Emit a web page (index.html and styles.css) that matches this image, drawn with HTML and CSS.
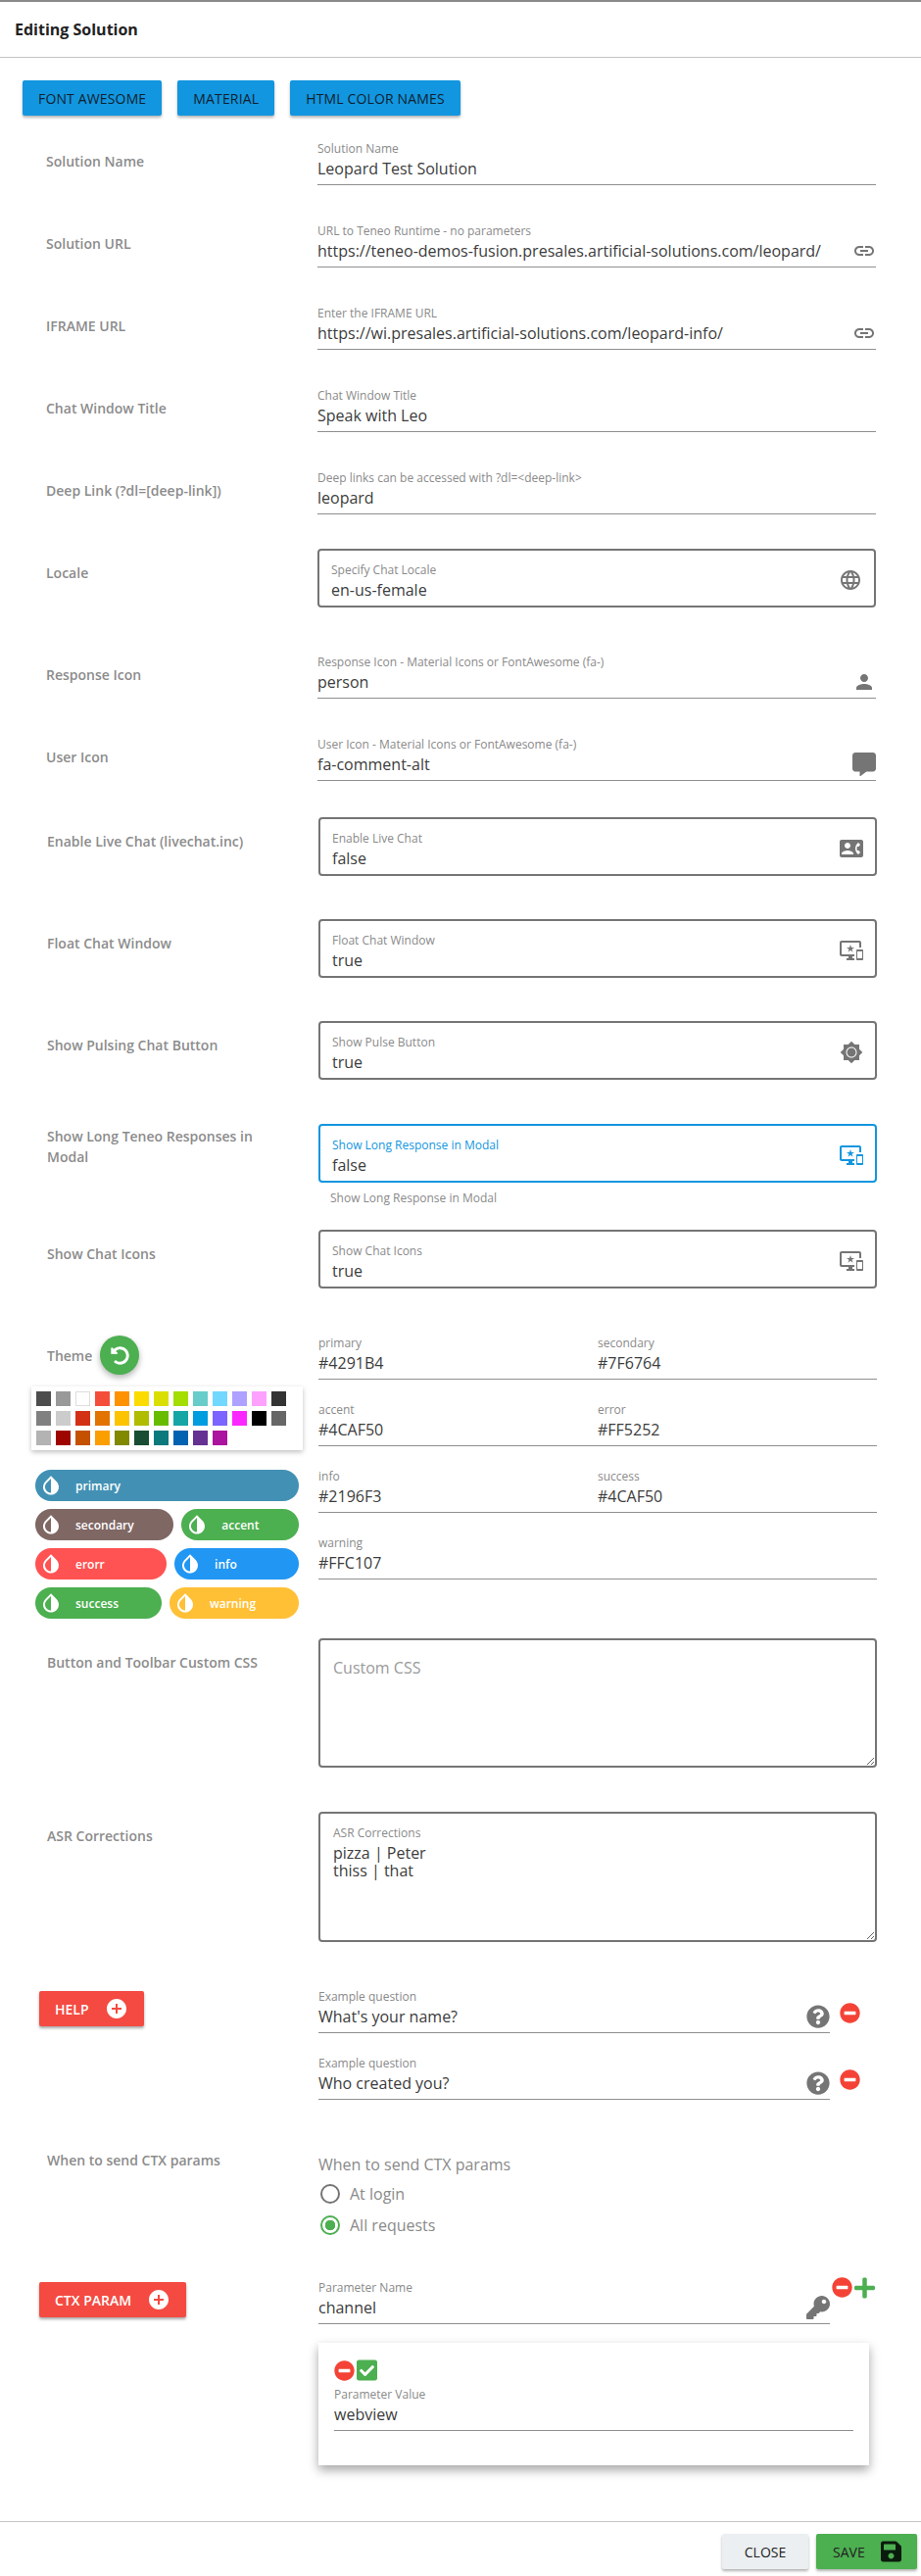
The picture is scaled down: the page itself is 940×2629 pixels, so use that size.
FILE: index.html
```html
<!DOCTYPE html>
<html lang="en">
<head>
  <meta charset="UTF-8">
  <title>Editing Solution</title>
  <link rel="stylesheet" href="styles.css">
</head>
<body>
  <svg class="sprite" xmlns="http://www.w3.org/2000/svg">
    <symbol id="i-link" viewBox="0 0 24 24"><path d="M3.9 12c0-1.71 1.39-3.1 3.1-3.1h4V7H7c-2.76 0-5 2.24-5 5s2.24 5 5 5h4v-1.9H7c-1.71 0-3.1-1.39-3.1-3.1zM8 13h8v-2H8v2zm9-6h-4v1.9h4c1.71 0 3.1 1.39 3.1 3.1s-1.39 3.1-3.1 3.1h-4V17h4c2.76 0 5-2.24 5-5s-2.24-5-5-5z"/></symbol>
    <symbol id="i-globe" viewBox="0 0 24 24"><path d="M11.99 2C6.47 2 2 6.48 2 12s4.47 10 9.99 10C17.52 22 22 17.52 22 12S17.52 2 11.99 2zm6.93 6h-2.95c-.32-1.25-.78-2.45-1.38-3.56 1.84.63 3.37 1.91 4.33 3.56zM12 4.04c.83 1.2 1.48 2.53 1.91 3.96h-3.82c.43-1.43 1.08-2.76 1.91-3.96zM4.26 14C4.1 13.36 4 12.69 4 12s.1-1.36.26-2h3.38c-.08.66-.14 1.32-.14 2 0 .68.06 1.34.14 2H4.26zm.82 2h2.95c.32 1.25.78 2.45 1.38 3.56-1.84-.63-3.37-1.9-4.33-3.56zm2.95-8H5.08c.96-1.66 2.49-2.93 4.33-3.56C8.81 5.55 8.35 6.75 8.03 8zM12 19.96c-.83-1.2-1.48-2.53-1.91-3.96h3.82c-.43 1.43-1.08 2.76-1.91 3.96zM14.34 14H9.66c-.09-.66-.16-1.32-.16-2 0-.68.07-1.35.16-2h4.68c.09.65.16 1.32.16 2 0 .68-.07 1.34-.16 2zm.25 5.56c.6-1.11 1.06-2.31 1.38-3.56h2.95c-.96 1.65-2.49 2.93-4.33 3.56zM16.36 14c.08-.66.14-1.32.14-2 0-.68-.06-1.34-.14-2h3.38c.16.64.26 1.31.26 2s-.1 1.36-.26 2h-3.38z"/></symbol>
    <symbol id="i-person" viewBox="0 0 24 24"><path d="M12 12c2.21 0 4-1.79 4-4s-1.79-4-4-4-4 1.79-4 4 1.79 4 4 4zm0 2c-2.67 0-8 1.34-8 4v2h16v-2c0-2.66-5.33-4-8-4z"/></symbol>
    <symbol id="i-comment" viewBox="0 0 512 512"><path d="M448 0H64C28.7 0 0 28.7 0 64v288c0 35.3 28.7 64 64 64h96v84c0 9.8 11.2 15.5 19.1 9.7L304 416h144c35.3 0 64-28.7 64-64V64c0-35.3-28.7-64-64-64z"/></symbol>
    <symbol id="i-contact" viewBox="0 0 24 24"><path d="M22 3H2C.9 3 0 3.9 0 5v14c0 1.1.9 2 2 2h20c1.1 0 1.99-.9 1.99-2L24 5c0-1.1-.9-2-2-2zM8 6c1.66 0 3 1.34 3 3s-1.34 3-3 3-3-1.34-3-3 1.34-3 3-3zm6 12H2v-1c0-2 4-3.1 6-3.1s6 1.1 6 3.1v1zm3.85-4h1.64L21 16l-1.99 1.99c-1.31-.98-2.28-2.38-2.73-3.99-.18-.64-.28-1.31-.28-2s.1-1.36.28-2c.45-1.62 1.42-3.01 2.73-3.99L21 8l-1.51 2h-1.64c-.22.63-.35 1.3-.35 2s.13 1.37.35 2z"/></symbol>
    <symbol id="i-devices" viewBox="0 0 24 24"><path d="M23 11.01L18 11c-.55 0-1 .45-1 1v9c0 .55.45 1 1 1h5c.55 0 1-.45 1-1v-9c0-.55-.45-.99-1-.99zM23 20h-5v-7h5v7zM20 2H2C.89 2 0 2.89 0 4v12c0 1.1.89 2 2 2h7v2H7v2h8v-2h-2v-2h2v-2H2V4h18v5h2V4c0-1.11-.9-2-2-2zm-8.03 7L11 6l-.97 3H7l2.47 1.76-.94 2.91 2.47-1.8 2.47 1.8-.94-2.91L15 9h-3.03z"/></symbol>
    <symbol id="i-sun" viewBox="0 0 24 24"><path d="M20 8.69V4h-4.69L12 .69 8.69 4H4v4.69L.69 12 4 15.31V20h4.69L12 23.31 15.31 20H20v-4.69L23.31 12 20 8.69zM12 17.5c-3.04 0-5.5-2.46-5.5-5.5s2.46-5.5 5.5-5.5 5.5 2.46 5.5 5.5-2.46 5.5-5.5 5.5zm0-10c-2.49 0-4.5 2.01-4.5 4.5s2.01 4.5 4.5 4.5 4.5-2.01 4.5-4.5-2.01-4.5-4.5-4.5z"/></symbol>
    <symbol id="i-undo" viewBox="0 0 512 512"><path d="M255.545 8c-66.269.119-126.438 26.233-170.86 68.685L48.971 40.971C33.851 25.851 8 36.559 8 57.941V192c0 13.255 10.745 24 24 24h134.059c21.382 0 32.09-25.851 16.971-40.971l-41.75-41.75c30.864-28.899 70.801-44.907 113.23-45.273 92.398-.798 170.283 73.977 169.484 169.442C423.236 348.009 349.816 424 256 424c-41.127 0-79.997-14.678-110.63-41.556-4.743-4.161-11.906-3.908-16.368.553L89.34 422.659c-4.872 4.872-4.631 12.815.482 17.433C133.798 479.813 192.074 504 256 504c136.966 0 247.999-111.033 248-247.998C504.001 119.193 392.354 7.755 255.545 8z"/></symbol>
    <symbol id="i-drop" viewBox="0 0 24 24"><path d="M17.66 7.93L12 2.27 6.34 7.93c-3.12 3.12-3.12 8.19 0 11.31C7.9 20.8 9.95 21.58 12 21.58c2.05 0 4.1-.78 5.66-2.34 3.12-3.12 3.12-8.19 0-11.31zM12 19.59c-1.6 0-3.11-.62-4.24-1.76C6.62 16.69 6 15.19 6 13.59s.62-3.11 1.76-4.24L12 5.1v14.49z"/></symbol>
    <symbol id="i-add" viewBox="0 0 24 24"><path d="M12 2C6.48 2 2 6.48 2 12s4.48 10 10 10 10-4.48 10-10S17.52 2 12 2zm5 11h-4v4h-2v-4H7v-2h4V7h2v4h4v2z"/></symbol>
    <symbol id="i-minus" viewBox="0 0 512 512"><path d="M256 8C119 8 8 119 8 256s111 248 248 248 248-111 248-248S393 8 256 8zM124 296c-6.6 0-12-5.4-12-12v-56c0-6.6 5.4-12 12-12h264c6.6 0 12 5.4 12 12v56c0 6.6-5.4 12-12 12H124z"/></symbol>
    <symbol id="i-help" viewBox="0 0 512 512"><path d="M504 256c0 136.997-111.043 248-248 248S8 392.997 8 256C8 119.083 119.043 8 256 8s248 111.083 248 248zM262.655 90c-54.497 0-89.255 22.957-116.549 63.758-3.536 5.286-2.353 12.415 2.715 16.258l34.699 26.31c5.205 3.947 12.621 3.008 16.665-2.122 17.864-22.658 30.113-35.797 57.303-35.797 20.429 0 45.698 13.148 45.698 32.958 0 14.976-12.363 22.667-32.534 33.976C247.128 238.528 216 254.941 216 296v4c0 6.627 5.373 12 12 12h56c6.627 0 12-5.373 12-12v-1.333c0-28.462 83.186-29.647 83.186-106.667 0-58.002-60.165-102-116.531-102zM256 338c-25.365 0-46 20.635-46 46 0 25.364 20.635 46 46 46s46-20.636 46-46c0-25.365-20.635-46-46-46z"/></symbol>
    <symbol id="i-key" viewBox="0 0 512 512"><path d="M512 176.001C512 273.203 433.202 352 336 352c-11.22 0-22.19-1.062-32.827-3.069l-24.012 27.014A23.999 23.999 0 0 1 261.223 384H224v40c0 13.255-10.745 24-24 24h-40v40c0 13.255-10.745 24-24 24H24c-13.255 0-24-10.745-24-24v-78.059c0-6.365 2.529-12.47 7.029-16.971l161.802-161.802C163.108 213.814 160 195.271 160 176 160 78.798 238.797.001 335.999 0 433.488-.001 512 78.511 512 176.001zM336 128c0 26.51 21.49 48 48 48s48-21.49 48-48-21.49-48-48-48-48 21.49-48 48z"/></symbol>
    <symbol id="i-plus" viewBox="0 0 448 512"><path d="M416 208H272V64c0-17.67-14.33-32-32-32h-32c-17.67 0-32 14.33-32 32v144H32c-17.67 0-32 14.33-32 32v32c0 17.67 14.33 32 32 32h144v144c0 17.67 14.33 32 32 32h32c17.67 0 32-14.33 32-32V304h144c17.67 0 32-14.33 32-32v-32c0-17.67-14.33-32-32-32z"/></symbol>
    <symbol id="i-check" viewBox="0 0 448 512"><path d="M400 480H48c-26.51 0-48-21.49-48-48V80c0-26.51 21.49-48 48-48h352c26.51 0 48 21.49 48 48v352c0 26.51-21.49 48-48 48zm-204.686-98.059l184-184c6.248-6.248 6.248-16.379 0-22.627l-22.627-22.627c-6.248-6.248-16.379-6.249-22.628 0L184 302.745l-70.059-70.059c-6.248-6.248-16.379-6.248-22.628 0l-22.627 22.627c-6.248 6.248-6.248 16.379 0 22.627l104 104c6.249 6.25 16.379 6.25 22.628.001z"/></symbol>
    <symbol id="i-save" viewBox="0 0 448 512"><path d="M433.941 129.941l-83.882-83.882A48 48 0 0 0 316.118 32H48C21.49 32 0 53.49 0 80v352c0 26.51 21.49 48 48 48h352c26.51 0 48-21.49 48-48V163.882a48 48 0 0 0-14.059-33.941zM224 416c-35.346 0-64-28.654-64-64 0-35.346 28.654-64 64-64s64 28.654 64 64c0 35.346-28.654 64-64 64zm96-304.52V212c0 6.627-5.373 12-12 12H76c-6.627 0-12-5.373-12-12V108c0-6.627 5.373-12 12-12h228.52c3.183 0 6.235 1.264 8.485 3.515l3.48 3.48A11.996 11.996 0 0 1 320 111.48z"/></symbol>
  </svg>

  <header class="title-bar">Editing Solution</header>

  <div class="toolbar">
    <button class="btn-blue">Font Awesome</button>
    <button class="btn-blue">Material</button>
    <button class="btn-blue">HTML Color Names</button>
  </div>

  <div class="row row-a gap-39">
    <div class="row-label">Solution Name</div>
    <div class="field">
      <div class="field-label">Solution Name</div>
      <div class="field-input"><span>Leopard Test Solution</span></div>
    </div>
  </div>

  <div class="row row-a gap-39">
    <div class="row-label">Solution URL</div>
    <div class="field">
      <div class="field-label">URL to Teneo Runtime - no parameters</div>
      <div class="field-input"><span>https://teneo-demos-fusion.presales.artificial-solutions.com/leopard/</span><svg class="icon"><use href="#i-link"/></svg></div>
    </div>
  </div>

  <div class="row row-a gap-39">
    <div class="row-label">IFRAME URL</div>
    <div class="field">
      <div class="field-label">Enter the IFRAME URL</div>
      <div class="field-input"><span>https://wi.presales.artificial-solutions.com/leopard-info/</span><svg class="icon"><use href="#i-link"/></svg></div>
    </div>
  </div>

  <div class="row row-a gap-39">
    <div class="row-label">Chat Window Title</div>
    <div class="field">
      <div class="field-label">Chat Window Title</div>
      <div class="field-input"><span>Speak with Leo</span></div>
    </div>
  </div>

  <div class="row row-a gap-35">
    <div class="row-label">Deep Link (?dl=[deep-link])</div>
    <div class="field">
      <div class="field-label">Deep links can be accessed with ?dl=&lt;deep-link&gt;</div>
      <div class="field-input"><span>leopard</span></div>
    </div>
  </div>

  <div class="row row-a gap-48">
    <div class="row-label boxed">Locale</div>
    <div class="select-box">
      <div class="select-text">
        <div class="field-label">Specify Chat Locale</div>
        <div class="select-value">en-us-female</div>
      </div>
      <svg class="icon"><use href="#i-globe"/></svg>
    </div>
  </div>

  <div class="row row-a gap-39">
    <div class="row-label">Response Icon</div>
    <div class="field">
      <div class="field-label">Response Icon - Material Icons or FontAwesome (fa-)</div>
      <div class="field-input"><span>person</span><svg class="icon"><use href="#i-person"/></svg></div>
    </div>
  </div>

  <div class="row row-a gap-37">
    <div class="row-label">User Icon</div>
    <div class="field">
      <div class="field-label">User Icon - Material Icons or FontAwesome (fa-)</div>
      <div class="field-input"><span>fa-comment-alt</span><svg class="icon"><use href="#i-comment"/></svg></div>
    </div>
  </div>

  <div class="row gap-44">
    <div class="row-label boxed">Enable Live Chat (livechat.inc)</div>
    <div class="select-box">
      <div class="select-text">
        <div class="field-label">Enable Live Chat</div>
        <div class="select-value">false</div>
      </div>
      <svg class="icon"><use href="#i-contact"/></svg>
    </div>
  </div>

  <div class="row gap-44">
    <div class="row-label boxed">Float Chat Window</div>
    <div class="select-box">
      <div class="select-text">
        <div class="field-label">Float Chat Window</div>
        <div class="select-value">true</div>
      </div>
      <svg class="icon"><use href="#i-devices"/></svg>
    </div>
  </div>

  <div class="row gap-45">
    <div class="row-label boxed">Show Pulsing Chat Button</div>
    <div class="select-box">
      <div class="select-text">
        <div class="field-label">Show Pulse Button</div>
        <div class="select-value">true</div>
      </div>
      <svg class="icon"><use href="#i-sun"/></svg>
    </div>
  </div>

  <div class="row gap-24">
    <div class="row-label two-line">Show Long Teneo Responses in Modal</div>
    <div class="field-col">
      <div class="select-box focused">
        <div class="select-text">
          <div class="field-label">Show Long Response in Modal</div>
          <div class="select-value">false</div>
        </div>
        <svg class="icon"><use href="#i-devices"/></svg>
      </div>
      <div class="hint">Show Long Response in Modal</div>
    </div>
  </div>

  <div class="row gap-48">
    <div class="row-label boxed">Show Chat Icons</div>
    <div class="select-box">
      <div class="select-text">
        <div class="field-label">Show Chat Icons</div>
        <div class="select-value">true</div>
      </div>
      <svg class="icon"><use href="#i-devices"/></svg>
    </div>
  </div>

  <div class="row gap-20">
    <div class="theme-col">
      <div class="theme-head">
        <div class="row-label">Theme</div>
        <button class="fab"><svg class="fab-icon"><use href="#i-undo"/></svg></button>
      </div>
      <div class="swatches">
        <i style="background:#4d4d4d"></i><i style="background:#999999"></i><i class="swatch-white"></i><i style="background:#f44e3b"></i><i style="background:#fe9200"></i><i style="background:#fcdc00"></i><i style="background:#dbdf00"></i><i style="background:#a4dd00"></i><i style="background:#68ccca"></i><i style="background:#73d8ff"></i><i style="background:#aea1ff"></i><i style="background:#fda1ff"></i><i style="background:#333333"></i>
        <i style="background:#808080"></i><i style="background:#cccccc"></i><i style="background:#d33115"></i><i style="background:#e27300"></i><i style="background:#fcc400"></i><i style="background:#b0bc00"></i><i style="background:#68bc00"></i><i style="background:#16a5a5"></i><i style="background:#009ce0"></i><i style="background:#7b64ff"></i><i style="background:#fa28ff"></i><i style="background:#000000"></i><i style="background:#666666"></i>
        <i style="background:#b3b3b3"></i><i style="background:#9f0500"></i><i style="background:#c45100"></i><i style="background:#fb9e00"></i><i style="background:#808900"></i><i style="background:#194d33"></i><i style="background:#0c797d"></i><i style="background:#0062b1"></i><i style="background:#653294"></i><i style="background:#ab149e"></i>
      </div>
      <div class="chips">
        <div class="chip chip-primary"><svg class="chip-icon"><use href="#i-drop"/></svg>primary</div>
        <div class="chip chip-secondary"><svg class="chip-icon"><use href="#i-drop"/></svg>secondary</div>
        <div class="chip chip-green"><svg class="chip-icon"><use href="#i-drop"/></svg>accent</div>
        <div class="chip chip-error"><svg class="chip-icon"><use href="#i-drop"/></svg>erorr</div>
        <div class="chip chip-info"><svg class="chip-icon"><use href="#i-drop"/></svg>info</div>
        <div class="chip chip-green"><svg class="chip-icon"><use href="#i-drop"/></svg>success</div>
        <div class="chip chip-warning"><svg class="chip-icon"><use href="#i-drop"/></svg>warning</div>
      </div>
    </div>
    <div class="theme-fields">
      <div class="field"><div class="field-label">primary</div><div class="field-input"><span>#4291B4</span></div></div>
      <div class="field"><div class="field-label">secondary</div><div class="field-input"><span>#7F6764</span></div></div>
      <div class="field"><div class="field-label">accent</div><div class="field-input"><span>#4CAF50</span></div></div>
      <div class="field"><div class="field-label">error</div><div class="field-input"><span>#FF5252</span></div></div>
      <div class="field"><div class="field-label">info</div><div class="field-input"><span>#2196F3</span></div></div>
      <div class="field"><div class="field-label">success</div><div class="field-input"><span>#4CAF50</span></div></div>
      <div class="field field-wide"><div class="field-label">warning</div><div class="field-input"><span>#FFC107</span></div></div>
    </div>
  </div>

  <div class="row gap-45">
    <div class="row-label boxed">Button and Toolbar Custom CSS</div>
    <div class="area-box">
      <label class="area-placeholder">Custom CSS</label>
      <textarea></textarea>
    </div>
  </div>

  <div class="row gap-48">
    <div class="row-label boxed">ASR Corrections</div>
    <div class="area-box area-tall">
      <label class="field-label">ASR Corrections</label>
      <textarea>pizza | Peter
thiss | that</textarea>
    </div>
  </div>

  <div class="row gap-51">
    <div class="label-col">
      <button class="btn-red">Help<svg class="icon-add"><use href="#i-add"/></svg></button>
    </div>
    <div class="field-col stack">
      <div class="line">
        <div class="field field-short">
          <div class="field-label">Example question</div>
          <div class="field-input"><span>What's your name?</span><svg class="icon"><use href="#i-help"/></svg></div>
        </div>
        <svg class="icon-minus"><use href="#i-minus"/></svg>
      </div>
      <div class="line">
        <div class="field field-short">
          <div class="field-label">Example question</div>
          <div class="field-input"><span>Who created you?</span><svg class="icon"><use href="#i-help"/></svg></div>
        </div>
        <svg class="icon-minus"><use href="#i-minus"/></svg>
      </div>
    </div>
  </div>

  <div class="row gap-40">
    <div class="row-label flush">When to send CTX params</div>
    <div class="radios">
      <div class="radios-title">When to send CTX params</div>
      <div class="radio"><span class="radio-dot"></span>At login</div>
      <div class="radio"><span class="radio-dot on"></span>All requests</div>
    </div>
  </div>

  <div class="row gap-57">
    <div class="label-col">
      <button class="btn-red">CTX Param<svg class="icon-add"><use href="#i-add"/></svg></button>
    </div>
    <div class="field-col">
      <div class="line">
        <div class="field field-short">
          <div class="field-label">Parameter Name</div>
          <div class="field-input"><span>channel</span><svg class="icon"><use href="#i-key"/></svg></div>
        </div>
        <svg class="icon-minus icon-minus-up"><use href="#i-minus"/></svg>
        <svg class="icon-plus"><use href="#i-plus"/></svg>
      </div>
      <div class="card">
        <div class="card-actions">
          <svg class="icon-minus-flat"><use href="#i-minus"/></svg>
          <svg class="icon-check"><use href="#i-check"/></svg>
        </div>
        <div class="field field-card">
          <div class="field-label">Parameter Value</div>
          <div class="field-input"><span>webview</span></div>
        </div>
      </div>
    </div>
  </div>

  <footer class="actions">
    <button class="btn-close">Close</button>
    <button class="btn-save">Save<svg class="icon-save"><use href="#i-save"/></svg></button>
  </footer>
</body>
</html>
```

FILE: styles.css
```css
body {
  font-family: "Open Sans", sans-serif;
  background: #fff;
  color: #333;
  margin: 0;
  padding: 0;
  width: 940px;
  height: 2629px;
  overflow: hidden;
  border-top: 2px solid #8a8a8a;
  box-sizing: border-box;
}

button {
  font-family: inherit;
  border: none;
  cursor: pointer;
}

.sprite {
  display: none;
}

.title-bar {
  height: 56px;
  line-height: 56px;
  padding-left: 15px;
  font-size: 16px;
  font-weight: 700;
  color: #222;
  border-bottom: 1px solid #c4c4c4;
}

.toolbar {
  display: flex;
  gap: 16px;
  margin: 23px 0 26px 23px;
}

.btn-blue {
  height: 36px;
  padding: 0 16px;
  background: #1296e0;
  color: #10222e;
  font-size: 14px;
  font-weight: 400;
  letter-spacing: 0.15px;
  text-transform: uppercase;
  border-radius: 2px;
  box-shadow: 0 2px 3px rgba(0, 0, 0, 0.3);
}

.row {
  display: flex;
  padding-left: 48px;
}

.row-a {
  padding-left: 47px;
}

.gap-20 { margin-bottom: 20px; }
.gap-24 { margin-bottom: 24px; }
.gap-35 { margin-bottom: 35px; }
.gap-37 { margin-bottom: 37px; }
.gap-39 { margin-bottom: 39px; }
.gap-40 { margin-bottom: 40px; }
.gap-44 { margin-bottom: 44px; }
.gap-45 { margin-bottom: 45px; }
.gap-48 { margin-bottom: 48px; }
.gap-51 { margin-bottom: 51px; }
.gap-57 { margin-bottom: 57px; }

.row-label {
  width: 277px;
  flex: none;
  padding-top: 10px;
  padding-right: 30px;
  box-sizing: border-box;
  font-size: 14px;
  font-weight: 600;
  line-height: 21px;
  color: #8c8c8c;
}

.row-label.boxed {
  padding-top: 14px;
}

.row-label.two-line {
  padding-top: 2px;
}

.row-label.flush {
  padding-top: 0;
}

.label-col {
  width: 277px;
  flex: none;
}

.field-col {
  width: 570px;
  flex: none;
}

.field {
  width: 570px;
  height: 45px;
  box-sizing: border-box;
  border-bottom: 1px solid #8f8f8f;
}

.field-label {
  display: block;
  height: 16px;
  font-size: 12px;
  line-height: 16px;
  color: #8a8a8a;
}

.field-input {
  display: flex;
  justify-content: space-between;
  height: 24px;
  font-size: 16px;
  line-height: 24px;
  color: #3c3c3c;
}

.icon {
  width: 24px;
  height: 24px;
  fill: #757575;
  flex: none;
}

.select-box {
  display: flex;
  width: 570px;
  height: 60px;
  box-sizing: border-box;
  border: 2px solid #757575;
  border-radius: 4px;
  padding: 12px 12px 0 12px;
}

.select-text {
  flex: 1;
}

.select-value {
  font-size: 16px;
  line-height: 24px;
  color: #3c3c3c;
}

.select-box .icon {
  margin-top: 6px;
}

.select-box.focused {
  border-color: #1296e0;
}

.select-box.focused .field-label {
  color: #1296e0;
}

.select-box.focused .icon {
  fill: #1296e0;
}

.hint {
  margin-top: 8px;
  padding-left: 12px;
  font-size: 12px;
  line-height: 16px;
  color: #8a8a8a;
}

/* theme */
.theme-col {
  width: 277px;
  flex: none;
}

.theme-head {
  display: flex;
  gap: 8px;
  height: 40px;
}

.theme-head .row-label {
  width: auto;
  padding-right: 0;
}

.fab {
  width: 40px;
  height: 40px;
  padding: 0;
  display: flex;
  align-items: center;
  justify-content: center;
  border-radius: 50%;
  background: #4caf50;
  box-shadow: 0 3px 6px rgba(0, 0, 0, 0.3);
}

.fab-icon {
  width: 19px;
  height: 19px;
  fill: #fff;
}

.swatches {
  display: flex;
  flex-wrap: wrap;
  align-content: flex-start;
  gap: 5px;
  width: 277px;
  height: 65px;
  box-sizing: border-box;
  margin: 12px 0 20px -16px;
  padding: 5px;
  background: #fff;
  box-shadow: 0 2px 5px rgba(0, 0, 0, 0.25);
}

.swatches i {
  display: block;
  width: 15px;
  height: 15px;
}

.swatches .swatch-white {
  box-sizing: border-box;
  border: 1px solid #ddd;
  background: #fff;
}

.chips {
  display: flex;
  flex-wrap: wrap;
  gap: 8px;
  width: 269px;
  margin-left: -12px;
}

.chip {
  display: flex;
  align-items: center;
  flex-grow: 1;
  height: 32px;
  padding-right: 39px;
  border-radius: 16px;
  color: #fff;
  font-size: 12px;
  font-weight: 600;
}

.chip-primary {
  width: 100%;
  background: #4291b4;
}

.chip-secondary { background: #7f6764; }
.chip-green { background: #4caf50; }
.chip-error { background: #ff5252; }
.chip-info { background: #2196f3; }
.chip-warning { background: #ffc036; }

.chip-icon {
  width: 24px;
  height: 24px;
  margin: 0 13px 0 4px;
  fill: #fff;
  flex: none;
}

.theme-fields {
  display: grid;
  grid-template-columns: 285px 285px;
  row-gap: 23px;
  align-content: start;
}

.theme-fields .field {
  width: auto;
}

.field-wide {
  grid-column: 1 / 3;
}

/* text areas */
.area-box {
  display: flex;
  flex-direction: column;
  width: 570px;
  height: 132px;
  box-sizing: border-box;
  border: 2px solid #757575;
  border-radius: 4px;
  padding: 12px 0 0 13px;
}

.area-box.area-tall {
  height: 133px;
}

.area-placeholder {
  font-size: 16px;
  line-height: 24px;
  padding-top: 4px;
  color: #9a9a9a;
}

textarea {
  flex: 1;
  display: block;
  padding: 0;
  margin: 3px 0 0;
  border: none;
  outline: none;
  resize: both;
  font-family: inherit;
  font-size: 16px;
  line-height: 18px;
  color: #3c3c3c;
  background: transparent;
}

/* repeaters */
.btn-red {
  display: flex;
  align-items: center;
  height: 36px;
  margin: 2px 0 0 -8px;
  padding: 0 16px;
  background: #f44a41;
  color: #fff;
  font-size: 14px;
  font-weight: 600;
  text-transform: uppercase;
  border-radius: 2px;
  box-shadow: 0 2px 3px rgba(0, 0, 0, 0.35);
}

.icon-add {
  width: 24px;
  height: 24px;
  margin-left: 16px;
  fill: #fff;
}

.stack {
  display: flex;
  flex-direction: column;
  gap: 23px;
}

.line {
  display: flex;
  align-items: flex-start;
}

.field.field-short {
  width: 522px;
}

.icon-minus {
  width: 21px;
  height: 21px;
  margin: 14px 0 0 10px;
  fill: #f44336;
  flex: none;
}

.icon-minus.icon-minus-up {
  margin: -3px 0 0 2px;
}

.icon-plus {
  width: 21px;
  height: 24px;
  margin: -4px 0 0 2px;
  fill: #4caf50;
  flex: none;
}

.card {
  width: 562px;
  height: 125px;
  box-sizing: border-box;
  margin-top: 19px;
  padding: 17px 16px 0;
  box-shadow: 0 5px 10px rgba(0, 0, 0, 0.35);
}

.card-actions {
  display: flex;
  align-items: center;
  gap: 2px;
  height: 22px;
  margin-bottom: 6px;
}

.icon-minus-flat {
  width: 21px;
  height: 21px;
  fill: #f44336;
}

.icon-check {
  width: 21px;
  height: 24px;
  fill: #4caf50;
}

.field.field-card {
  width: 530px;
}

/* radios */
.radios {
  padding-top: 3px;
}

.radios-title {
  font-size: 16px;
  line-height: 24px;
  color: #8a8a8a;
  margin-bottom: 2px;
}

.radio {
  display: flex;
  align-items: center;
  gap: 10px;
  height: 32px;
  padding-left: 2px;
  font-size: 16px;
  color: #8a8a8a;
}

.radio-dot {
  width: 20px;
  height: 20px;
  box-sizing: border-box;
  border: 2px solid #757575;
  border-radius: 50%;
}

.radio-dot.on {
  border-color: #4caf50;
  background: radial-gradient(circle, #4caf50 5px, #fff 5.5px);
}

/* footer */
.actions {
  display: flex;
  justify-content: flex-end;
  gap: 8px;
  padding: 12px 4px 0 0;
  border-top: 1px solid #c4c4c4;
}

.btn-close,
.btn-save {
  height: 36px;
  font-size: 14px;
  font-weight: 400;
  text-transform: uppercase;
  border-radius: 2px;
  color: #222;
  box-shadow: 0 2px 3px rgba(0, 0, 0, 0.3);
}

.btn-close {
  width: 88px;
  background: #eceff1;
}

.btn-save {
  display: flex;
  align-items: center;
  width: 103px;
  padding: 0 0 0 17px;
  background: #4caf50;
}

.icon-save {
  width: 21px;
  height: 24px;
  margin-left: 16px;
  fill: #0a1a0c;
}
```
